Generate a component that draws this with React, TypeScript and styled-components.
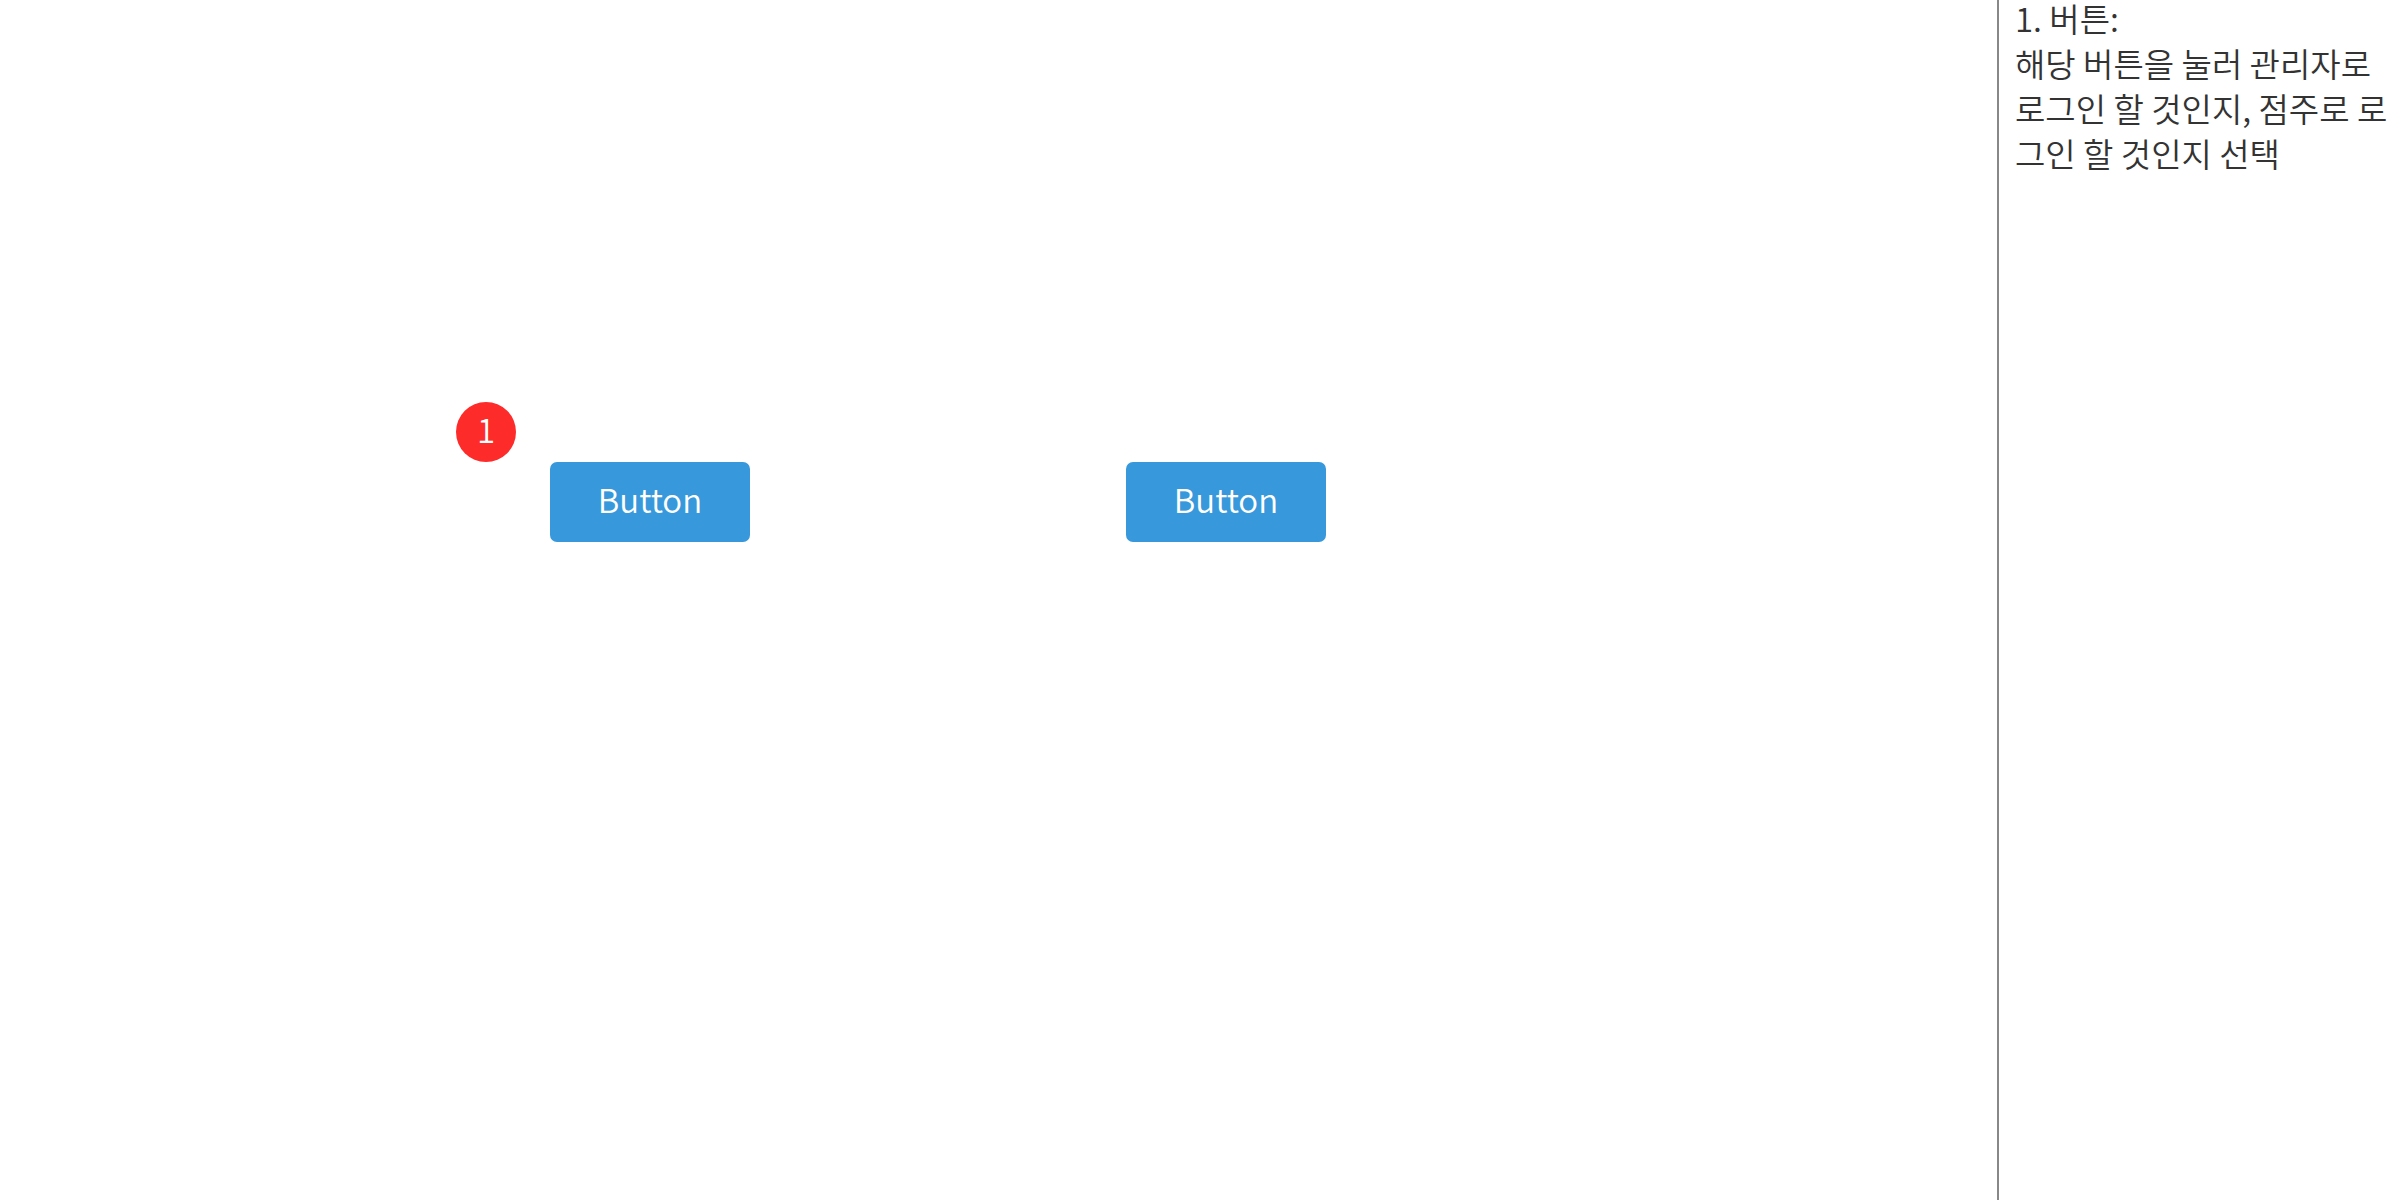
import React from "react";
import styled, { createGlobalStyle } from "styled-components";

const Global = createGlobalStyle`
  html, body { margin: 0; padding: 0; background: #ffffff; }
  body { font-family: "Noto Sans CJK KR", "Noto Sans", sans-serif; }
  * { box-sizing: border-box; }
`;

const Page = styled.div`
  display: flex;
  width: 2400px;
  height: 1200px;
  background: #ffffff;
  overflow: hidden;
`;

const Canvas = styled.main`
  flex: 1;
  display: flex;
  align-items: flex-start;
  gap: 376px;
  padding: 462px 0 0 550px;
`;

const ButtonSlot = styled.div`
  position: relative;
`;

const Badge = styled.span`
  position: absolute;
  left: -94px;
  top: -60px;
  width: 60px;
  height: 60px;
  border-radius: 50%;
  background: #fe2b2b;
  color: #ffffff;
  display: flex;
  align-items: center;
  justify-content: center;
  padding-bottom: 5px;
  font-family: "Noto Sans CJK KR", "Noto Sans", sans-serif;
  font-weight: 350;
  font-size: 33px;
  line-height: 1;
`;

const ActionButton = styled.button`
  width: 200px;
  height: 80px;
  border: none;
  border-radius: 7px;
  background: #3798db;
  color: #ffffff;
  font-family: "Noto Sans CJK KR", "Noto Sans", sans-serif;
  font-weight: 350;
  font-size: 33px;
  line-height: 1;
  display: flex;
  align-items: center;
  justify-content: center;
  padding: 0 0 5px;
  cursor: pointer;
`;

const Sidebar = styled.aside`
  width: 403px;
  flex-shrink: 0;
  border-left: 2px solid #888888;
  padding: 0 12px 0 16px;
`;

const Note = styled.p`
  margin: -4px 0 0;
  color: #333333;
  font-family: "Noto Sans CJK KR", "Noto Sans", sans-serif;
  font-weight: 350;
  font-size: 33px;
  line-height: 45px;
`;

export default function App() {
  return (
    <>
      <Global />
      <Page>
        <Canvas>
          <ButtonSlot>
            <Badge>1</Badge>
            <ActionButton>Button</ActionButton>
          </ButtonSlot>
          <ButtonSlot>
            <ActionButton>Button</ActionButton>
          </ButtonSlot>
        </Canvas>
        <Sidebar>
          <Note>
            1. 버튼:
            <br />
            해당 버튼을 눌러 관리자로 로그인 할 것인지, 점주로 로그인 할 것인지 선택
          </Note>
        </Sidebar>
      </Page>
    </>
  );
}
